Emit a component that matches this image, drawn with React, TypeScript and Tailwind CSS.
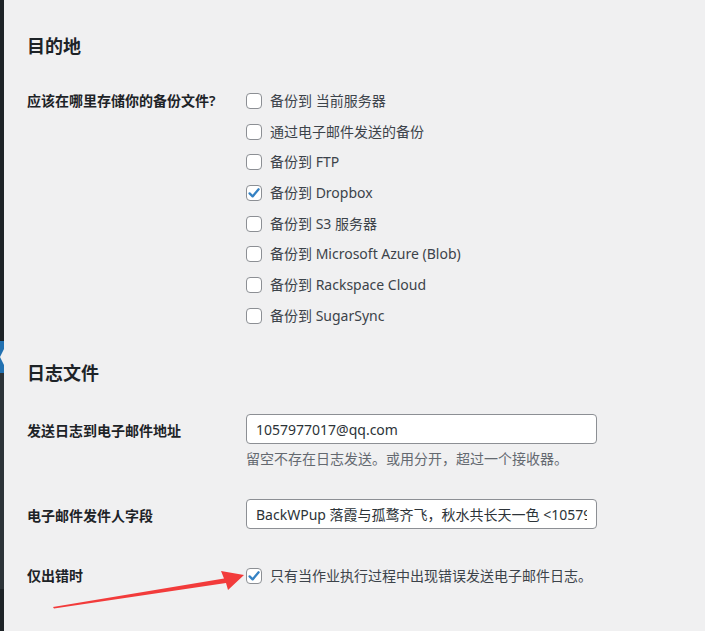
import React from "react";

const FONT = {
  fontFamily: '"Noto Sans", "Noto Sans CJK SC", sans-serif',
};

function Checkbox({ checked }: { checked?: boolean }) {
  return (
    <span className="flex h-[16px] w-[16px] shrink-0 items-center justify-center rounded-[4px] border border-[#8c8f94] bg-white">
      {checked && (
        <svg width="14" height="14" viewBox="0 0 14 14">
          <path
            d="M2.6 7.4 L5.6 10.4 L11.6 3.3"
            fill="none"
            stroke="#3582c4"
            strokeWidth="2.3"
            strokeLinecap="round"
            strokeLinejoin="round"
          />
        </svg>
      )}
    </span>
  );
}

const options: { label: string; checked?: boolean }[] = [
  { label: "备份到 当前服务器" },
  { label: "通过电子邮件发送的备份" },
  { label: "备份到 FTP" },
  { label: "备份到 Dropbox", checked: true },
  { label: "备份到 S3 服务器" },
  { label: "备份到 Microsoft Azure (Blob)" },
  { label: "备份到 Rackspace Cloud" },
  { label: "备份到 SugarSync" },
];

export default function App() {
  return (
    <div
      className="relative flex h-[631px] w-[705px] overflow-hidden bg-[#f0f0f1] text-[14px] text-[#3c434a]"
      style={FONT}
    >
      {/* admin sidebar edge */}
      <div className="flex w-[4px] shrink-0 flex-col">
        <div className="h-[341px] bg-[#1d2327]" />
        <div className="relative h-[32px] bg-[#2271b1]">
          <div className="absolute right-0 top-[8px] h-0 w-0 border-y-[8px] border-r-[4px] border-y-transparent border-r-[#f0f0f1]" />
        </div>
        <div className="h-[216px] bg-[#2c3338]" />
        <div className="flex-1 bg-[#1d2327]" />
      </div>

      {/* content */}
      <div className="flex-1 pl-[23px]">
        <h2 className="mt-[35px] text-[18px] font-semibold leading-[23px] text-[#1d2327]">
          目的地
        </h2>

        <div className="mt-[27.5px] flex">
          <div className="w-[219px] shrink-0 text-[14px] font-semibold leading-[30.7px] text-[#1d2327]">
            应该在哪里存储你的备份文件?
          </div>
          <div className="flex flex-col">
            {options.map((o) => (
              <label
                key={o.label}
                className="flex h-[30.7px] items-center gap-[8px] whitespace-nowrap leading-[20px]"
              >
                <Checkbox checked={o.checked} />
                <span>{o.label}</span>
              </label>
            ))}
          </div>
        </div>

        <h2 className="mt-[31px] text-[18px] font-semibold leading-[23px] text-[#1d2327]">
          日志文件
        </h2>

        <div className="mt-[29px] flex">
          <div className="w-[219px] shrink-0 pt-[7px] font-semibold leading-[20px] text-[#1d2327]">
            发送日志到电子邮件地址
          </div>
          <div className="flex flex-col">
            <input
              readOnly
              value="1057977017@qq.com"
              className="h-[30px] w-[351px] rounded-[4px] border border-[#8c8f94] bg-white px-[9px] text-[14px] text-[#2c3338] outline-none"
              style={FONT}
            />
            <p className="mt-[5px] leading-[20px] text-[#646970]">
              留空不存在日志发送。或用分开，超过一个接收器。
            </p>
          </div>
        </div>

        <div className="mt-[30px] flex">
          <div className="w-[219px] shrink-0 pt-[7px] font-semibold leading-[20px] text-[#1d2327]">
            电子邮件发件人字段
          </div>
          <input
            readOnly
            value="BackWPup 落霞与孤鹜齐飞，秋水共长天一色 <1057977017@qq.com>"
            className="h-[30px] w-[351px] rounded-[4px] border border-[#8c8f94] bg-white px-[9px] text-[14px] text-[#2c3338] outline-none"
            style={FONT}
          />
        </div>

        <div className="mt-[37px] flex">
          <div className="w-[219px] shrink-0 font-semibold leading-[20px] text-[#1d2327]">
            仅出错时
          </div>
          <label className="flex h-[20px] items-center gap-[8px] whitespace-nowrap leading-[20px]">
            <Checkbox checked />
            <span>只有当作业执行过程中出现错误发送电子邮件日志。</span>
          </label>
        </div>
      </div>

      {/* red annotation arrow */}
      <svg
        className="pointer-events-none absolute left-0 top-0"
        width="705"
        height="631"
        viewBox="0 0 705 631"
      >
        <polygon
          points="53,607 224,578.5 221,571 244,575 228,590 226,583 54,608.5"
          fill="#f23b3b"
        />
      </svg>
    </div>
  );
}
